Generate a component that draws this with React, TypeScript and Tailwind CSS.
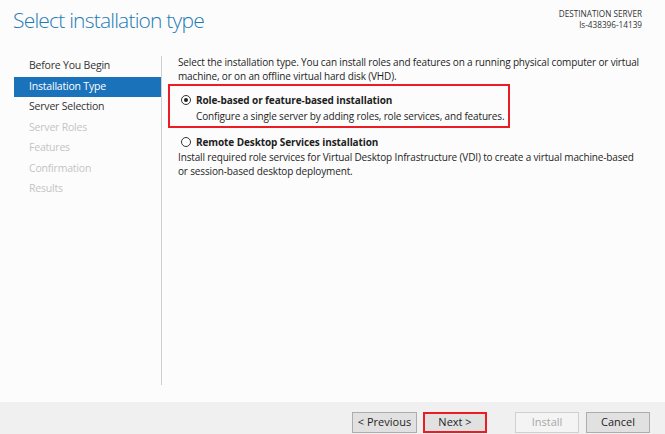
import React from "react";

const font = { fontFamily: '"Open Sans", "Noto Sans", sans-serif' };

const navItems: { label: string; state: "done" | "active" | "enabled" | "disabled" }[] = [
  { label: "Before You Begin", state: "done" },
  { label: "Installation Type", state: "active" },
  { label: "Server Selection", state: "enabled" },
  { label: "Server Roles", state: "disabled" },
  { label: "Features", state: "disabled" },
  { label: "Confirmation", state: "disabled" },
  { label: "Results", state: "disabled" },
];

function Radio({ checked }: { checked: boolean }) {
  return (
    <span className="flex h-[10px] w-[10px] shrink-0 items-center justify-center rounded-full border border-[#333] bg-white">
      {checked && <span className="h-[4px] w-[4px] rounded-full bg-[#222]" />}
    </span>
  );
}

export default function App() {
  return (
    <div
      className="flex h-[434px] w-[665px] flex-col overflow-hidden bg-[#fcfcfc] text-[#1e1e1e]"
      style={font}
    >
      {/* Header */}
      <div className="flex h-[56px] shrink-0 justify-between pl-[13px] pr-[23px]">
        <div className="pt-[6px] text-[21px] font-light leading-[28px] tracking-[-0.8px] text-[#1d7bb6]">
          Select installation type
        </div>
        <div className="flex flex-col items-end pt-[8px] text-[8.2px] leading-[11px] text-[#333]">
          <span>DESTINATION SERVER</span>
          <span>ls-438396-14139</span>
        </div>
      </div>

      {/* Body */}
      <div className="flex h-[346px] shrink-0">
        <div className="flex w-[162px] shrink-0 flex-col pb-[17px]">
          <div className="flex h-full flex-col border-r border-[#d0d0d0] pl-[14px]">
            {navItems.map((item) => (
              <div
                key={item.label}
                className={
                  "flex h-[20.5px] items-center whitespace-nowrap pl-[15px] text-[10.5px] tracking-[-0.2px] " +
                  (item.state === "active"
                    ? "bg-[#1a72bb] text-white"
                    : item.state === "disabled"
                    ? "text-[#c4c4c4]"
                    : "text-[#333]")
                }
              >
                {item.label}
              </div>
            ))}
          </div>
        </div>

        <div className="flex flex-1 flex-col whitespace-nowrap pl-[6px] text-[10px] leading-[14px] tracking-[-0.15px] text-[#1e1e1e]">
          <p className="pl-[10px] leading-[13.5px]">
            Select the installation type. You can install roles and features on a running physical computer or virtual
            <br />
            machine, or on an offline virtual hard disk (VHD).
          </p>

          <div className="mt-[1px] h-[44px] w-[342px] border-2 border-[#ec1c24] pl-[11px] pt-[7px]">
            <div className="flex h-[14px] items-center gap-[5px]">
              <Radio checked />
              <span className="text-[10px] font-bold tracking-[-0.1px]">Role-based or feature-based installation</span>
            </div>
            <div className="mt-[2px] pl-[15px]">
              Configure a single server by adding roles, role services, and features.
            </div>
          </div>

          <div className="mt-[7px] flex h-[14px] items-center gap-[5px] pl-[13px]">
            <Radio checked={false} />
            <span className="text-[10px] font-bold tracking-[-0.1px]">Remote Desktop Services installation</span>
          </div>
          <p className="mt-[1px] pl-[10px]">
            Install required role services for Virtual Desktop Infrastructure (VDI) to create a virtual machine-based
            <br />
            or session-based desktop deployment.
          </p>
        </div>
      </div>

      {/* Footer */}
      <div className="flex flex-1 items-start justify-end bg-[#f0f0f0] pr-[15px] pt-[10px] text-[11px]">
        <button className="h-[21px] w-[65px] border border-[#adadad] bg-[#e1e1e1] text-[#1e1e1e]">
          &lt; Previous
        </button>
        <button className="ml-[6px] h-[21px] w-[64px] border-2 border-[#ec1c24] bg-[#e1e1e1] text-[#1e1e1e]">
          Next &gt;
        </button>
        <button className="ml-[28px] h-[21px] w-[64px] border border-[#cfcfcf] bg-[#f4f4f4] text-[#a8a8a8]">
          Install
        </button>
        <button className="ml-[7px] h-[21px] w-[64px] border border-[#adadad] bg-[#e1e1e1] text-[#1e1e1e]">
          Cancel
        </button>
      </div>
    </div>
  );
}
